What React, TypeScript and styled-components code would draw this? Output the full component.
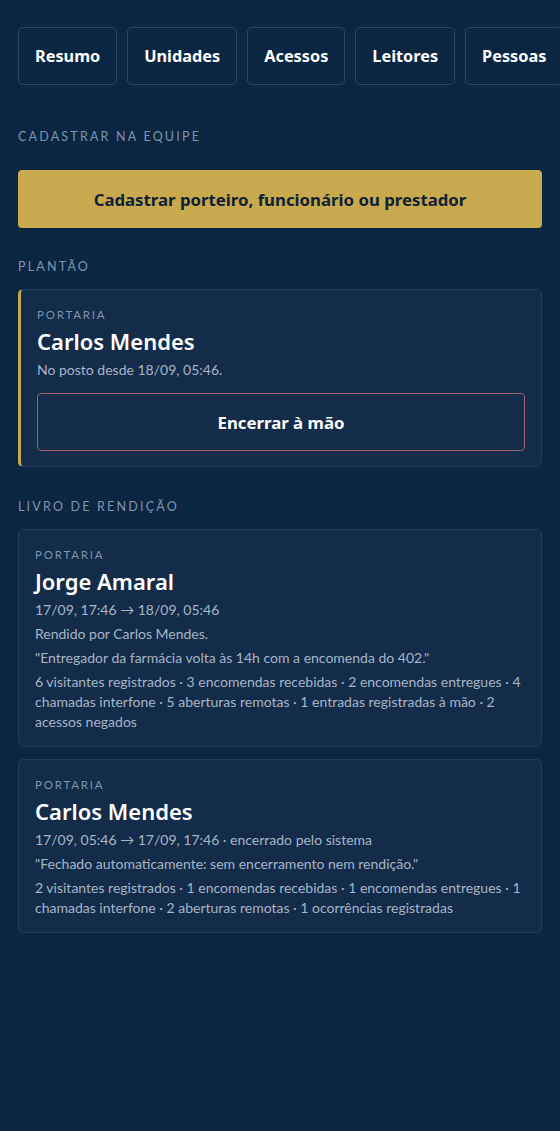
import React from "react";
import styled, { createGlobalStyle } from "styled-components";

const Global = createGlobalStyle`
  html, body { margin: 0; padding: 0; background: #0b2642; }
  body { font-family: Lato, "Noto Sans", sans-serif; color: #e8eef6; }
  * { box-sizing: border-box; }
`;

const Page = styled.div`
  min-height: 1131px;
  background: #0b2642;
  padding: 27px 18px 40px 18px;
  overflow: hidden;
`;

const Tabs = styled.nav`
  display: flex;
  gap: 10px;
  margin-right: -18px;
  overflow: hidden;
`;

const Tab = styled.button`
  flex: none;
  height: 58px;
  padding: 0 16px;
  background: transparent;
  border: 1px solid #2c4564;
  border-radius: 5px;
  color: #ffffff;
  font-family: "Noto Sans", sans-serif;
  font-size: 16.3px;
  font-weight: 700;
`;

const SectionLabel = styled.h2`
  margin: 0;
  font-size: 12.5px;
  font-weight: 400;
  letter-spacing: 2.2px;
  color: #7f95ae;
  text-transform: uppercase;
  line-height: 16px;
`;

const Section = styled.section<{ $top: number }>`
  margin-top: ${(p) => p.$top}px;
  display: flex;
  flex-direction: column;
`;

const GoldButton = styled.button`
  margin-top: 25px;
  height: 58px;
  width: 100%;
  border: none;
  border-radius: 4px;
  background: #c9a94e;
  color: #0f2136;
  font-family: "Noto Sans", sans-serif;
  font-size: 16.8px;
  font-weight: 700;
`;

const Card = styled.div<{ $accent?: boolean }>`
  background: #132c4a;
  border: 1px solid #213b5c;
  border-left: ${(p) => (p.$accent ? "3px solid #c9a94e" : "1px solid #213b5c")};
  border-radius: 5px;
  padding: ${(p) => (p.$accent ? "17px 16px 15px 16px" : "17px 16px 14px 16px")};
  display: flex;
  flex-direction: column;
`;

const Kicker = styled.div`
  font-size: 11.5px;
  letter-spacing: 1.8px;
  color: #7f95ae;
  line-height: 16px;
`;

const Name = styled.div`
  font-family: "Noto Sans", sans-serif;
  font-size: 22px;
  font-weight: 600;
  color: #ffffff;
  line-height: 30px;
  margin-top: 3px;
`;

const Meta = styled.div`
  font-size: 14px;
  color: #a6b5c7;
  line-height: 20px;
  margin-top: 4px;
`;

const Line = styled.div`
  font-size: 14px;
  color: #a6b5c7;
  line-height: 20px;
  margin-top: 4px;
`;

const OutlineButton = styled.button`
  margin-top: 13px;
  height: 58px;
  width: 100%;
  background: transparent;
  border: 1px solid #a35f66;
  border-radius: 4px;
  color: #ffffff;
  font-family: "Noto Sans", sans-serif;
  font-size: 16.8px;
  font-weight: 700;
`;

const List = styled.div`
  display: flex;
  flex-direction: column;
  gap: 12px;
  margin-top: 14px;
`;

const CardSlot = styled.div`
  margin-top: 14px;
  display: flex;
  flex-direction: column;
`;

export default function App() {
  return (
    <Page>
      <Global />
      <Tabs>
        {["Resumo", "Unidades", "Acessos", "Leitores", "Pessoas"].map((t) => (
          <Tab key={t}>{t}</Tab>
        ))}
      </Tabs>

      <Section $top={44}>
        <SectionLabel>Cadastrar na equipe</SectionLabel>
        <GoldButton>Cadastrar porteiro, funcionário ou prestador</GoldButton>
      </Section>

      <Section $top={31}>
        <SectionLabel>Plantão</SectionLabel>
        <CardSlot>
          <Card $accent>
            <Kicker>PORTARIA</Kicker>
            <Name>Carlos Mendes</Name>
            <Meta>No posto desde 18/09, 05:46.</Meta>
            <OutlineButton>Encerrar à mão</OutlineButton>
          </Card>
        </CardSlot>
      </Section>

      <Section $top={32}>
        <SectionLabel>Livro de rendição</SectionLabel>
        <List>
          <Card>
            <Kicker>PORTARIA</Kicker>
            <Name>Jorge Amaral</Name>
            <Meta>17/09, 17:46 → 18/09, 05:46</Meta>
            <Line>Rendido por Carlos Mendes.</Line>
            <Line>"Entregador da farmácia volta às 14h com a encomenda do 402."</Line>
            <Line>
              6 visitantes registrados · 3 encomendas recebidas · 2 encomendas entregues · 4 chamadas interfone · 5
              aberturas remotas · 1 entradas registradas à mão · 2 acessos negados
            </Line>
          </Card>
          <Card>
            <Kicker>PORTARIA</Kicker>
            <Name>Carlos Mendes</Name>
            <Meta>17/09, 05:46 → 17/09, 17:46 · encerrado pelo sistema</Meta>
            <Line>"Fechado automaticamente: sem encerramento nem rendição."</Line>
            <Line>
              2 visitantes registrados · 1 encomendas recebidas · 1 encomendas entregues · 1 chamadas interfone · 2
              aberturas remotas · 1 ocorrências registradas
            </Line>
          </Card>
        </List>
      </Section>
    </Page>
  );
}
